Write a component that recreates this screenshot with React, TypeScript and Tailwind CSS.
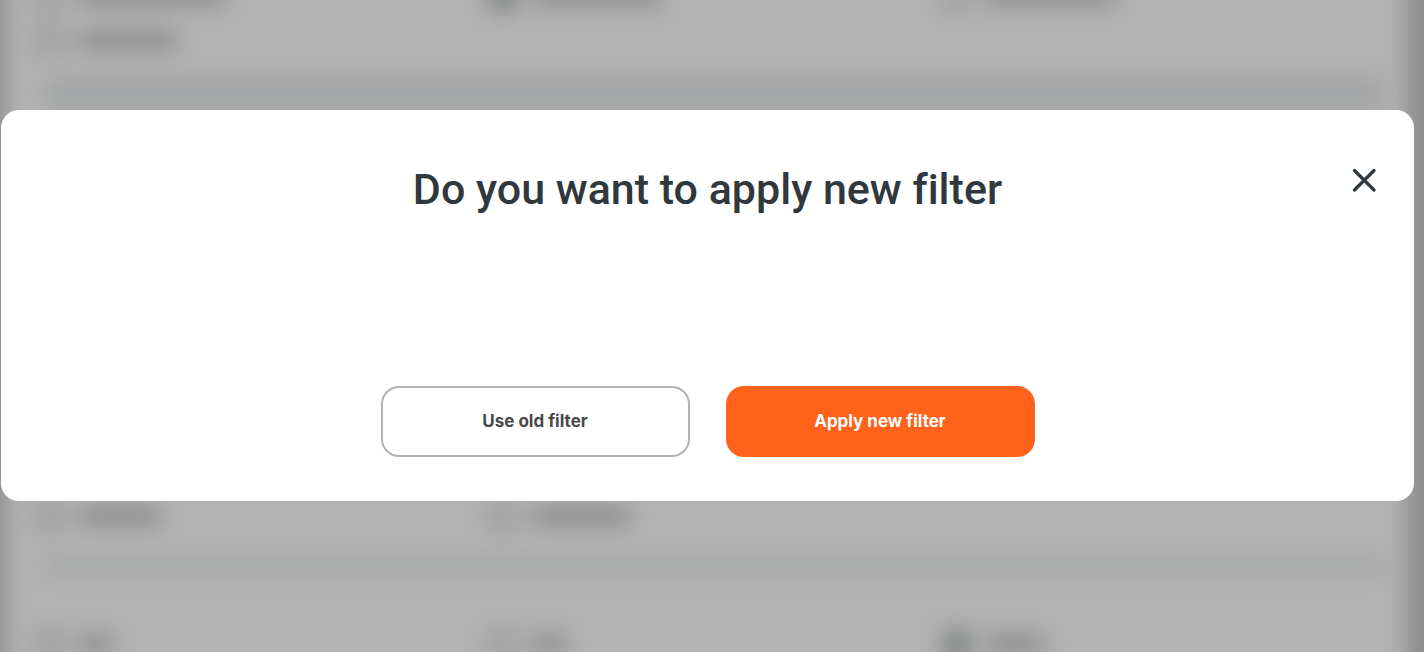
type Option = { width: string; checked?: boolean };

const rows: Record<string, Option[]> = {
  first: [{ width: "w-36" }, { width: "w-32", checked: true }, { width: "w-32" }],
  second: [{ width: "w-24" }],
  third: [{ width: "w-20" }, { width: "w-24" }],
  fourth: [{ width: "w-8" }, { width: "w-8" }, { width: "w-14", checked: true }],
};

function OptionRow({ options }: { options: Option[] }) {
  return (
    <div className="-mr-3 grid h-11 grid-cols-3 items-center">
      {options.map((option, index) => (
        <div key={index} className="flex items-center gap-4">
          <span
            className={
              option.checked
                ? "size-7 rounded-md bg-[#b0b9b4]"
                : "size-7 rounded-md border-4 border-[#b6beba]"
            }
          />
          <span className={`h-4 bg-[#c0c0c0] ${option.width}`} />
        </div>
      ))}
    </div>
  );
}

function FilterPage() {
  return (
    <div aria-hidden="true" className="absolute -inset-10 overflow-hidden bg-[#c6c6c6] pr-14 pl-11 blur-[11px]">
      <div className="min-h-full bg-white pt-3.5 pr-6 pl-8">
        <OptionRow options={rows.first} />
        <OptionRow options={rows.second} />
        <div className="mt-3 ml-2 h-12 bg-[#f6f7f6] pt-2">
          <div className="h-5 bg-[#e8ebed]" />
        </div>
        <div className="h-[372px]" />
        <OptionRow options={rows.third} />
        <div className="mt-5 ml-2 h-4 bg-[#ebedee]" />
        <div className="h-12" />
        <OptionRow options={rows.fourth} />
      </div>
    </div>
  );
}

export default function App() {
  return (
    <div className="relative min-h-screen overflow-hidden font-[Inter,sans-serif]">
      <FilterPage />
      <div className="relative min-h-screen bg-black/30 pt-[110px] pr-[10px] pb-8 pl-px">
        <div
          role="dialog"
          aria-modal="true"
          aria-labelledby="dialog-title"
          className="relative flex flex-col items-center rounded-[18px] bg-white px-12 pt-[52px] pb-11"
        >
          <button
            type="button"
            aria-label="Close"
            className="absolute top-[52px] right-8 flex size-9 items-center justify-center text-[#30383d]"
          >
            <svg viewBox="0 0 24 24" className="size-6" fill="none" stroke="currentColor" strokeWidth="3.2" strokeLinecap="round">
              <path d="M2.5 2.5 22 22M22 2.5 2.5 22" />
            </svg>
          </button>
          <h1
            id="dialog-title"
            className="text-center font-[Roboto,sans-serif] text-[43px] leading-[54px] font-medium text-[#30383d] [font-variant-ligatures:none]"
          >
            Do you want to apply new filter
          </h1>
          <div className="mt-[170px] flex flex-wrap justify-center gap-9">
            <button
              type="button"
              className="h-[71px] w-[309px] rounded-[18px] border-2 border-[#b2b2b2] bg-white text-[17px] font-bold text-[#484848]"
            >
              Use old filter
            </button>
            <button
              type="button"
              className="h-[71px] w-[309px] rounded-[18px] bg-[#ff621a] text-[17px] font-bold text-white"
            >
              Apply new filter
            </button>
          </div>
        </div>
      </div>
    </div>
  );
}
